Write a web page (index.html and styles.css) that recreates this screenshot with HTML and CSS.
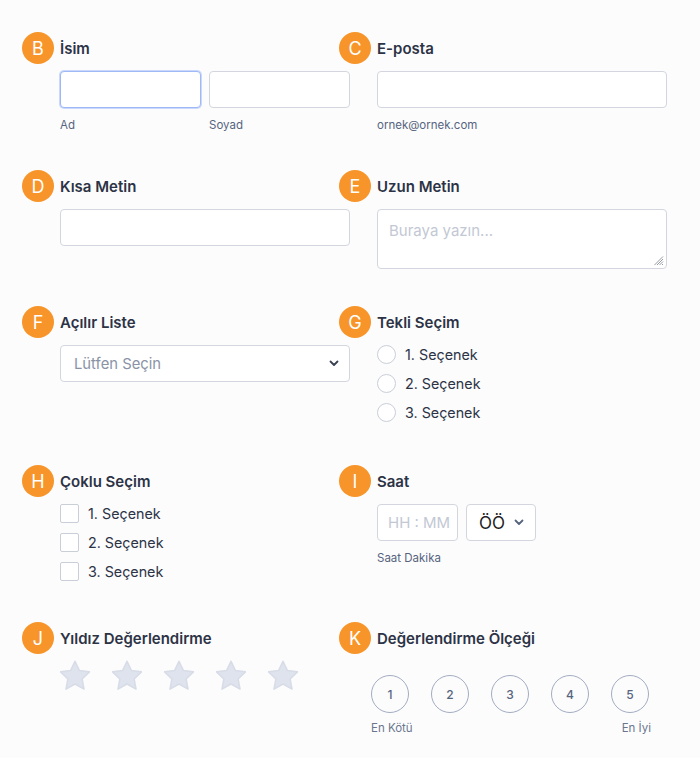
FILE: index.html
```html
<!DOCTYPE html>
<html lang="tr">
<head>
<meta charset="utf-8">
<link rel="stylesheet" href="styles.css">
</head>
<body>
<div class="form">
  <div class="field">
    <div class="head"><span class="badge">B</span><span class="label">İsim</span></div>
    <div class="body">
      <div class="pair">
        <div class="sub"><div class="input focus"></div><div class="hint">Ad</div></div>
        <div class="sub"><div class="input"></div><div class="hint">Soyad</div></div>
      </div>
    </div>
  </div>
  <div class="field">
    <div class="head"><span class="badge">C</span><span class="label">E-posta</span></div>
    <div class="body">
      <div class="input"></div><div class="hint">ornek@ornek.com</div>
    </div>
  </div>

  <div class="field">
    <div class="head"><span class="badge">D</span><span class="label">Kısa Metin</span></div>
    <div class="body"><div class="input"></div></div>
  </div>
  <div class="field">
    <div class="head"><span class="badge">E</span><span class="label">Uzun Metin</span></div>
    <div class="body">
      <div class="textarea"><span class="ph">Buraya yazın...</span>
        <svg class="grip" width="10" height="10" viewBox="0 0 10 10"><path d="M9 3L3 9M9 5.5L5.5 9M9 8L8 9M9 0.5L0.5 9" stroke="#8a8f99" stroke-width="0.9"/></svg>
      </div>
    </div>
  </div>

  <div class="field">
    <div class="head"><span class="badge">F</span><span class="label">Açılır Liste</span></div>
    <div class="body">
      <div class="input select"><span class="sel-ph">Lütfen Seçin</span>
        <svg width="10" height="7" viewBox="0 0 10 7"><path d="M1.5 1.5L5 5l3.5-3.5" fill="none" stroke="#3a4152" stroke-width="1.8" stroke-linecap="round" stroke-linejoin="round"/></svg>
      </div>
    </div>
  </div>
  <div class="field">
    <div class="head"><span class="badge">G</span><span class="label">Tekli Seçim</span></div>
    <div class="body options">
      <div class="opt"><span class="radio"></span>1. Seçenek</div>
      <div class="opt"><span class="radio"></span>2. Seçenek</div>
      <div class="opt"><span class="radio"></span>3. Seçenek</div>
    </div>
  </div>

  <div class="field">
    <div class="head"><span class="badge">H</span><span class="label">Çoklu Seçim</span></div>
    <div class="body options checks">
      <div class="opt"><span class="check"></span>1. Seçenek</div>
      <div class="opt"><span class="check"></span>2. Seçenek</div>
      <div class="opt"><span class="check"></span>3. Seçenek</div>
    </div>
  </div>
  <div class="field">
    <div class="head"><span class="badge">I</span><span class="label">Saat</span></div>
    <div class="body">
      <div class="time-row">
        <div class="input time"><span class="ph">HH : MM</span></div>
        <div class="input ampm"><span class="ampm-val">ÖÖ</span>
          <svg width="10" height="7" viewBox="0 0 10 7"><path d="M1.5 1.5L5 5l3.5-3.5" fill="none" stroke="#57647e" stroke-width="1.8" stroke-linecap="round" stroke-linejoin="round"/></svg>
        </div>
      </div>
      <div class="hint">Saat Dakika</div>
    </div>
  </div>

  <div class="field">
    <div class="head"><span class="badge">J</span><span class="label">Yıldız Değerlendirme</span></div>
    <div class="body stars">
      <svg class="star" viewBox="2.5 2 19 19"><path d="M12 2.8l2.8 5.9 6.4.8-4.7 4.5 1.2 6.4L12 17.2l-5.7 3.2 1.2-6.4-4.7-4.5 6.4-.8z"/></svg>
      <svg class="star" viewBox="2.5 2 19 19"><path d="M12 2.8l2.8 5.9 6.4.8-4.7 4.5 1.2 6.4L12 17.2l-5.7 3.2 1.2-6.4-4.7-4.5 6.4-.8z"/></svg>
      <svg class="star" viewBox="2.5 2 19 19"><path d="M12 2.8l2.8 5.9 6.4.8-4.7 4.5 1.2 6.4L12 17.2l-5.7 3.2 1.2-6.4-4.7-4.5 6.4-.8z"/></svg>
      <svg class="star" viewBox="2.5 2 19 19"><path d="M12 2.8l2.8 5.9 6.4.8-4.7 4.5 1.2 6.4L12 17.2l-5.7 3.2 1.2-6.4-4.7-4.5 6.4-.8z"/></svg>
      <svg class="star" viewBox="2.5 2 19 19"><path d="M12 2.8l2.8 5.9 6.4.8-4.7 4.5 1.2 6.4L12 17.2l-5.7 3.2 1.2-6.4-4.7-4.5 6.4-.8z"/></svg>
    </div>
  </div>
  <div class="field">
    <div class="head"><span class="badge">K</span><span class="label">Değerlendirme Ölçeği</span></div>
    <div class="body scale">
      <div class="circles">
        <span class="num">1</span><span class="num">2</span><span class="num">3</span><span class="num">4</span><span class="num">5</span>
      </div>
      <div class="ends"><span>En Kötü</span><span>En İyi</span></div>
    </div>
  </div>
</div>
</body>
</html>
```

FILE: styles.css
```css
html, body {
  margin: 0;
  background: #fcfcfd;
}
body {
  font-family: Inter, "Noto Sans", sans-serif;
  color: #2c3345;
}
.form {
  display: grid;
  grid-template-columns: 317px 330px;
  row-gap: 37px;
  padding: 32px 0 0 22px;
}
.head {
  display: flex;
  align-items: center;
  height: 32px;
}
.badge {
  width: 32px;
  height: 32px;
  border-radius: 50%;
  background: #f7952a;
  color: #fff;
  font-size: 18px;
  display: flex;
  align-items: center;
  justify-content: center;
  margin-right: 6px;
  flex: none;
}
.label {
  font-size: 15px;
  font-weight: 600;
  color: #2c3345;
}
.body {
  margin-left: 38px;
  margin-top: 7px;
  width: 290px;
}
.pair {
  display: flex;
  gap: 8px;
}
.sub {
  flex: 1;
}
.input {
  box-sizing: border-box;
  height: 37px;
  border: 1px solid #d3d6de;
  border-radius: 4px;
  background: #fff;
}
.input.focus {
  border-color: #9fb9f6;
  box-shadow: 0 0 0 1px #c9d8fb;
}
.hint {
  font-size: 11.5px;
  color: #57647e;
  margin-top: 10px;
  line-height: 15px;
}
.textarea {
  position: relative;
  box-sizing: border-box;
  height: 60px;
  border: 1px solid #d3d6de;
  border-radius: 4px;
  background: #fff;
  padding: 10px 11px;
}
.ph {
  font-size: 15px;
  color: #c3c8d4;
}
.grip {
  position: absolute;
  right: 2px;
  bottom: 2px;
}
.select {
  display: flex;
  align-items: center;
  justify-content: space-between;
  padding: 0 10px 0 13px;
}
.sel-ph {
  font-size: 14.8px;
  color: #8a93a6;
}
.options {
  display: flex;
  flex-direction: column;
  margin-top: 2px;
  margin-bottom: 1px;
}
.options.checks {
  margin-bottom: -1px;
}
.opt {
  display: flex;
  align-items: center;
  height: 29px;
  font-size: 14.3px;
  color: #2c3345;
}
.radio {
  box-sizing: border-box;
  width: 19px;
  height: 19px;
  border: 1px solid #c9ced8;
  border-radius: 50%;
  background: #fff;
  margin-right: 9px;
}
.check {
  box-sizing: border-box;
  width: 19px;
  height: 19px;
  border: 1px solid #c9ced8;
  border-radius: 2px;
  background: #fff;
  margin-right: 9px;
}
.time-row {
  display: flex;
  gap: 8px;
}
.time {
  width: 81px;
  display: flex;
  align-items: center;
  padding-left: 10px;
}
.ampm {
  width: 70px;
  display: flex;
  align-items: center;
  justify-content: space-between;
  padding: 0 11px 0 12px;
}
.ampm-val {
  font-size: 17px;
  color: #222;
}
.stars {
  display: flex;
  gap: 22px;
  margin-top: 6px;
}
.star {
  width: 30px;
  height: 30px;
}
.star path {
  fill: #dfe3ed;
  stroke: #d7dce7;
  stroke-width: 1;
  stroke-linejoin: round;
}
.scale {
  margin-left: 32px;
  margin-top: 21px;
  width: 280px;
}
.circles {
  display: flex;
  gap: 22px;
}
.num {
  box-sizing: border-box;
  width: 38px;
  height: 38px;
  border: 1.5px solid #a3acc3;
  border-radius: 50%;
  display: flex;
  align-items: center;
  justify-content: center;
  font-size: 12px;
  font-weight: 500;
  color: #57647e;
}
.ends {
  display: flex;
  justify-content: space-between;
  font-size: 11.5px;
  color: #6b768d;
  margin-top: 8px;
}
```
